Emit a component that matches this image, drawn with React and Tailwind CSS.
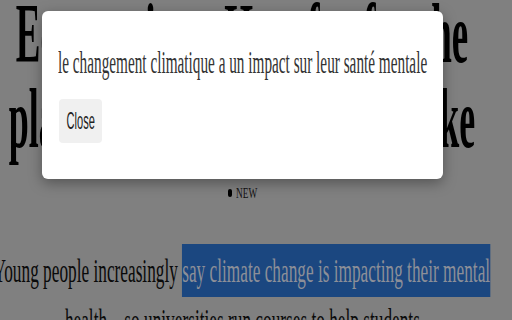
import React from 'react';

const serif = { fontFamily: '"Liberation Serif", "Times New Roman", serif' };

const Article = () => (
  <div className="w-[484px] flex flex-col" style={serif}>
    {/* titre */}
    <h1 className="mt-[-9px] font-bold text-[84px] leading-[85px] text-black">
      <div className="flex justify-center">
        <span className="whitespace-nowrap scale-x-[0.44]">Eco-anxiety: How far for the</span>
      </div>
      <div className="flex justify-center">
        <span className="whitespace-nowrap scale-x-[0.428]">planet should universities take</span>
      </div>
    </h1>

    <div className="mt-[22px] mx-auto w-[29px] h-[20px] flex items-center gap-[4px]">
      <span className="inline-block w-[4px] h-[8px] rounded-full bg-black shrink-0" />
      <span className="text-[15px] leading-[20px] text-[#111] whitespace-nowrap origin-left scale-x-[0.62]">NEW</span>
    </div>

    <div className="mt-[43px] text-[34px] leading-[50px] text-[#0a0a0a]">
      <div className="flex justify-center">
        <span className="whitespace-nowrap scale-x-[0.508]">
          Young people increasingly{' '}
          <span className="bg-[#1b4780] text-[#8c8f98] py-[8px]">say climate change is impacting their mental</span>
        </span>
      </div>
      <div className="flex justify-center">
        <span className="whitespace-nowrap scale-x-[0.508]">health—so universities run courses to help students</span>
      </div>
    </div>
  </div>
);

const Modal = () => (
  <div className="absolute left-[42px] top-[11px] w-[401px] h-[168px] bg-white rounded-[6px] shadow-[0_4px_14px_rgba(0,0,0,0.35)] pl-[16px] pt-[31px]">
    <p className="text-[32px] leading-[40px] text-[#333]" style={serif}>
      <span className="inline-block whitespace-nowrap origin-left scale-x-[0.477]">
        le changement climatique a un impact sur leur santé mentale
      </span>
    </p>
    <button
      className="mt-[17px] ml-[1px] w-[43px] h-[44px] bg-[#f0f0f0] rounded-[4px] flex items-center justify-center text-[24px] text-[#222]"
      style={{ fontFamily: '"Liberation Sans", Arial, sans-serif' }}
    >
      <span className="whitespace-nowrap scale-x-[0.46]">Close</span>
    </button>
  </div>
);

export default function App() {
  return (
    <div className="relative w-[512px] h-[320px] overflow-hidden bg-[#808080]">
      <Article />
      <Modal />
    </div>
  );
}
